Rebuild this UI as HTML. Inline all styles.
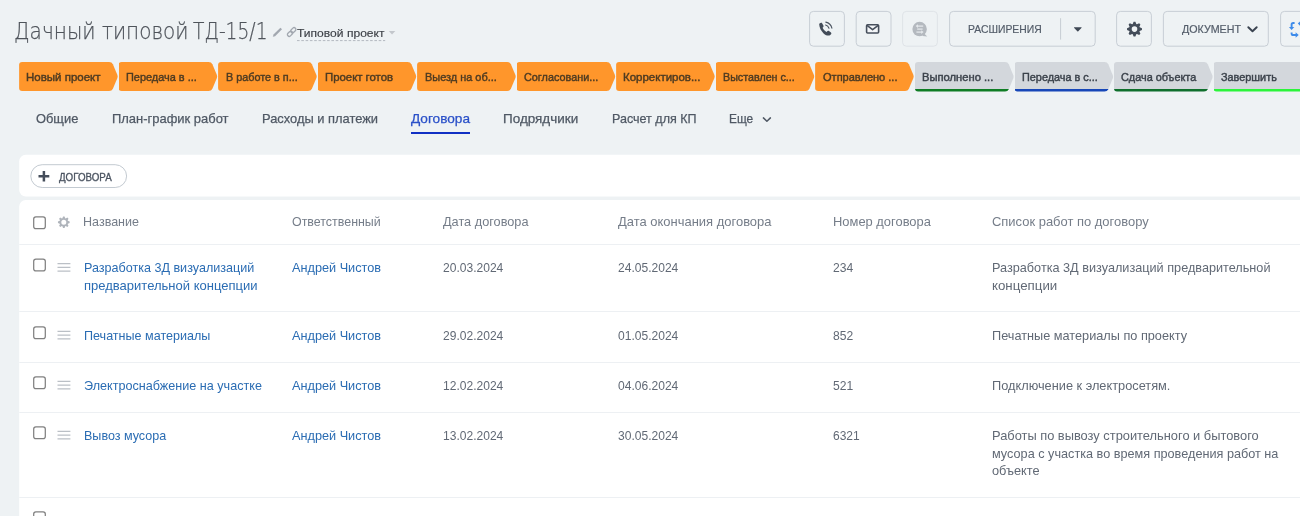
<!DOCTYPE html>
<html lang="ru">
<head>
<meta charset="utf-8">
<title>Дачный типовой ТД-15/1</title>
<style>
*{box-sizing:border-box;margin:0;padding:0}
html,body{width:1300px;height:516px;overflow:hidden;background:#eef2f4;font-family:"Liberation Sans",sans-serif;color:#535c69}
.a{position:absolute}
.t{position:absolute;white-space:nowrap;display:block}
.title{font-family:"DejaVu Sans","Liberation Sans",sans-serif;font-weight:200;font-size:23.3px;line-height:30px;color:#4f545b;-webkit-text-stroke:0.25px currentColor}
.sub{font-size:11.2px;line-height:16px;color:#3d4147;-webkit-text-stroke:0.15px currentColor}
.bt{font-size:11px;line-height:16px;color:#535c69;-webkit-text-stroke:0.2px currentColor}
.sg{font-size:10.7px;line-height:16px;-webkit-text-stroke:0.42px currentColor}
.sg.o{color:#4e3b22}
.sg.g{color:#3b424b}
.tab{font-size:13px;line-height:18px;color:#4f5864;-webkit-text-stroke:0.25px currentColor}
.tab.act{color:#2a50c8}
.add{font-size:10px;line-height:14px;color:#4a5360;-webkit-text-stroke:0.3px currentColor}
.th{font-size:13px;line-height:16px;color:#757d89}
.td{font-size:13px;line-height:18px;color:#616975}
.td.l{color:#2a6cb3}
.so{position:absolute;top:62px;width:99px;height:29px;background:#ff962b;clip-path:path('M3,0H90Q92.8,0 93.8,2.2L98.3,13Q98.9,14.5 98.3,16L93.8,26.8Q92.8,29 90,29H3Q0,29 0,26V3Q0,0 3,0Z')}
.sgr{position:absolute;top:62px;width:99px;height:29.5px;clip-path:path('M3,0H90Q92.8,0 93.8,2.2L98.3,13.3Q98.9,14.8 98.3,16.3L93.8,27.3Q92.8,29.5 90,29.5H3Q0,29.5 0,26.5V3Q0,0 3,0Z')}
svg{position:absolute;overflow:visible}
#tx{position:absolute;left:0;top:0;width:1300px;height:516px;will-change:transform}
</style>
</head>
<body>
<div class="so" style="left:19.1px"></div>
<div class="so" style="left:118.6px"></div>
<div class="so" style="left:218.1px"></div>
<div class="so" style="left:317.6px"></div>
<div class="so" style="left:417.1px"></div>
<div class="so" style="left:516.6px"></div>
<div class="so" style="left:616.1px"></div>
<div class="so" style="left:715.6px"></div>
<div class="so" style="left:815.1px"></div>
<div class="sgr" style="left:915.0px;background:linear-gradient(#d3d7dc 0,#d3d7dc 27px,#0f7d24 27.3px,#0f7d24 100%)"></div>
<div class="sgr" style="left:1014.5px;background:linear-gradient(#d3d7dc 0,#d3d7dc 27px,#1747b8 27.3px,#1747b8 100%)"></div>
<div class="sgr" style="left:1114.0px;background:linear-gradient(#d3d7dc 0,#d3d7dc 27px,#0f6f2c 27.3px,#0f6f2c 100%)"></div>
<div class="sgr" style="left:1213.5px;background:linear-gradient(#d3d7dc 0,#d3d7dc 27px,#2bf43a 27.3px,#2bf43a 100%)"></div>
<div class="a" style="left:411.2px;top:132.2px;width:58.8px;height:1.9px;background:#1130c4"></div>
<svg width="1300" height="516" viewBox="0 0 1300 516" style="left:0;top:0">
<rect x="19.2" y="154.8" width="1300" height="41.7" rx="6.5" fill="#fff"/>
<rect x="19.2" y="200" width="1300" height="340" rx="6.5" fill="#fff"/>
<rect x="19.2" y="244" width="1300" height="1" fill="#edf0f3"/>
<rect x="19.2" y="311" width="1300" height="1" fill="#edf0f3"/>
<rect x="19.2" y="362" width="1300" height="1" fill="#edf0f3"/>
<rect x="19.2" y="412" width="1300" height="1" fill="#edf0f3"/>
<rect x="19.2" y="497" width="1300" height="1" fill="#edf0f3"/>
<rect x="30.8" y="164.7" width="95.8" height="22.8" rx="11.4" fill="none" stroke="#c3cad1" stroke-width="1"/>
<rect x="809.6" y="11.4" width="34.8" height="34.8" rx="3.8" fill="none" stroke="#c3cad1" stroke-width="0.9"/>
<rect x="856.2" y="11.4" width="34.8" height="34.8" rx="3.8" fill="none" stroke="#c3cad1" stroke-width="0.9"/>
<rect x="902.6" y="11.4" width="34.8" height="34.8" rx="3.8" fill="none" stroke="#dde1e5" stroke-width="0.9"/>
<rect x="949.6" y="11.4" width="145.6" height="34.8" rx="3.8" fill="none" stroke="#c3cad1" stroke-width="0.9"/>
<rect x="1116.6" y="11.4" width="34.8" height="34.8" rx="3.8" fill="none" stroke="#c3cad1" stroke-width="0.9"/>
<rect x="1163.4" y="11.4" width="104.9" height="34.8" rx="3.8" fill="none" stroke="#c3cad1" stroke-width="0.9"/>
<rect x="1280.6" y="11.4" width="39.0" height="34.8" rx="3.8" fill="none" stroke="#c3cad1" stroke-width="0.9"/>
<path d="M297,40.6H385.2" stroke="#b3b9c0" stroke-width="1" stroke-dasharray="2.6 1.7" fill="none"/>
<path d="M1060.6,18.2V39.6" stroke="#c6cdd3" stroke-width="1" fill="none"/>
<rect x="33.7" y="216.85" width="11.6" height="11.8" rx="2.2" fill="#fff" stroke="#808080" stroke-width="1.25"/>
<rect x="33.7" y="259.05" width="11.6" height="11.8" rx="2.2" fill="#fff" stroke="#808080" stroke-width="1.25"/>
<rect x="33.7" y="326.85" width="11.6" height="11.8" rx="2.2" fill="#fff" stroke="#808080" stroke-width="1.25"/>
<rect x="33.7" y="376.85" width="11.6" height="11.8" rx="2.2" fill="#fff" stroke="#808080" stroke-width="1.25"/>
<rect x="33.7" y="426.85" width="11.6" height="11.8" rx="2.2" fill="#fff" stroke="#808080" stroke-width="1.25"/>
<rect x="33.7" y="511.85" width="11.6" height="11.8" rx="2.2" fill="#fff" stroke="#808080" stroke-width="1.25"/>
<path d="M57.5,263.60H70.4M57.5,267.35H70.4M57.5,271.10H70.4" stroke="#bbc0c6" stroke-width="1.15" fill="none"/>
<path d="M57.5,331.40H70.4M57.5,335.15H70.4M57.5,338.90H70.4" stroke="#bbc0c6" stroke-width="1.15" fill="none"/>
<path d="M57.5,381.40H70.4M57.5,385.15H70.4M57.5,388.90H70.4" stroke="#bbc0c6" stroke-width="1.15" fill="none"/>
<path d="M57.5,431.40H70.4M57.5,435.15H70.4M57.5,438.90H70.4" stroke="#bbc0c6" stroke-width="1.15" fill="none"/>
<!-- pencil -->
<path d="M272.8,36.8 L273.5,34.6 L280.4,27.7 L282,29.3 L275.1,36.2 Z" fill="#a2a8b0"/>
<!-- link -->
<g fill="none" stroke="#a2a8b0" stroke-width="1.3">
<rect x="-2.9" y="-1.8" width="5.8" height="3.6" rx="1.8" transform="translate(290,33.8) rotate(-44)"/>
<rect x="-2.9" y="-1.8" width="5.8" height="3.6" rx="1.8" transform="translate(293.3,30.2) rotate(-44)"/>
</g>
<!-- sub dropdown triangle -->
<path d="M388.8,30.9 H395.3 L392.05,34.5Z" fill="#c3c7cc"/>
<!-- phone -->
<path d="M819.2,24.6C819,23.4 820.6,22.4 821.8,22.8L823.4,25.6C823.8,26.4 823.4,27.2 822.6,27.8C823.2,29.6 825.2,31.4 826.6,32C827.4,31 828.2,30.6 829,31L831,32.6C831.8,33.4 831.2,34.6 830,35.2C828.4,36 826,35.6 823.6,33.4C821,31 819.4,27.6 819.2,24.6Z" fill="#434c59"/>
<g fill="none" stroke="#4a5360" stroke-width="1.1" stroke-linecap="round">
<path d="M825.8,22.1 A8.1,8.1 0 0 1 831.9,28.2"/>
<path d="M825.6,25 A5.2,5.2 0 0 1 829,28.2"/>
</g>
<!-- mail -->
<g fill="none" stroke="#464f5c" stroke-width="1.6" stroke-linejoin="round">
<rect x="866.6" y="24.8" width="12" height="8.2" rx="1" fill="#f4f6f8"/>
<path d="M867,25.3 L872.6,29.6 L878.2,25.3"/>
</g>
<!-- chat -->
<circle cx="919.6" cy="29.1" r="7.25" fill="#b4b9bf"/>
<path d="M924,33.2 L927.2,36.6 L922.6,36Z" fill="#b4b9bf"/>
<g fill="none" stroke="#e4e8eb" stroke-width="1.3">
<path d="M917,26.1H923.2"/><path d="M917.2,29.1H922.6"/><path d="M916.4,32.1H922.2"/>
</g>
<path d="M915.6,26.1L918,24.3V27.9Z" fill="#e4e8eb"/>
<path d="M923.6,32.1L921.2,30.3V33.9Z" fill="#e4e8eb"/>
<!-- dropdown triangle -->
<path d="M1074.2,27.2H1081.4Q1081.9,27.6 1081.4,28.1L1078.3,31.3Q1077.8,31.7 1077.3,31.3L1074.2,28.1Q1073.7,27.6 1074.2,27.2Z" fill="#3f4855"/>
<!-- gear -->
<path d="M1132.72,23.90 L1133.60,21.65 L1135.40,21.65 L1136.28,23.90 L1136.92,24.16 L1139.13,23.20 L1140.40,24.47 L1139.44,26.68 L1139.70,27.32 L1141.95,28.20 L1141.95,30.00 L1139.70,30.88 L1139.44,31.52 L1140.40,33.73 L1139.13,35.00 L1136.92,34.04 L1136.28,34.30 L1135.40,36.55 L1133.60,36.55 L1132.72,34.30 L1132.08,34.04 L1129.87,35.00 L1128.60,33.73 L1129.56,31.52 L1129.30,30.88 L1127.05,30.00 L1127.05,28.20 L1129.30,27.32 L1129.56,26.68 L1128.60,24.47 L1129.87,23.20 L1132.08,24.16Z M1131.70,29.10 a2.80,2.80 0 1,0 5.60,0 a2.80,2.80 0 1,0 -5.60,0Z" fill="#434c59" fill-rule="evenodd"/>
<!-- chevron doc -->
<path d="M1248.3,27.2 L1252.5,31.3 L1256.7,27.2" fill="none" stroke="#3a4350" stroke-width="1.9" stroke-linecap="round" stroke-linejoin="round"/>
<!-- sync blue -->
<g fill="none" stroke="#3d8bea" stroke-width="1.9">
<path d="M1294.6,23 H1293.2 Q1291.6,23 1291.6,24.6 V27.6"/>
<path d="M1291.6,32.4 V33.4 Q1291.6,35 1293.2,35 H1296"/>
</g>
<path d="M1288.9,26.9H1294.3L1291.6,30Z" fill="#3d8bea"/>
<path d="M1295.6,32.3V37.7L1298.7,35Z" fill="#3d8bea"/>
<path d="M1297.8,23.6L1300.5,20.9V26.3Z" fill="#3d8bea"/>
<!-- tab chevron -->
<path d="M763.4,117.9 L766.9,121.3 L770.4,117.9" fill="none" stroke="#4f5864" stroke-width="1.5" stroke-linecap="round" stroke-linejoin="round"/>
<!-- plus -->
<path d="M43.9,170.9V181.5M38.5,176.2H49.3" fill="none" stroke="#444d5a" stroke-width="2.5"/>
<!-- small gear -->
<path d="M62.41,218.18 L63.04,216.40 L64.56,216.40 L65.19,218.18 L65.69,218.39 L67.40,217.57 L68.48,218.65 L67.66,220.36 L67.87,220.86 L69.65,221.49 L69.65,223.01 L67.87,223.64 L67.66,224.14 L68.48,225.85 L67.40,226.93 L65.69,226.11 L65.19,226.32 L64.56,228.10 L63.04,228.10 L62.41,226.32 L61.91,226.11 L60.20,226.93 L59.12,225.85 L59.94,224.14 L59.73,223.64 L57.95,223.01 L57.95,221.49 L59.73,220.86 L59.94,220.36 L59.12,218.65 L60.20,217.57 L61.91,218.39Z M61.30,222.25 a2.50,2.50 0 1,0 5.00,0 a2.50,2.50 0 1,0 -5.00,0Z" fill="#afb4bb" fill-rule="evenodd"/>
</svg>
<div id="tx">
<span class="t title" style="left:13.60px;top:15.60px;transform-origin:0 0;transform:scaleX(0.8621);">Дачный</span>
<span class="t title" style="left:101.70px;top:15.60px;transform-origin:0 0;transform:scaleX(0.8575);">типовой</span>
<span class="t title" style="left:193.40px;top:15.60px;transform-origin:0 0;transform:scaleX(0.8007);">ТД-15/1</span>
<span class="t sub" style="left:296.70px;top:25.20px;transform-origin:0 0;transform:scaleX(1.0784);">Типовой проект</span>
<span class="t bt" style="left:968.00px;top:20.80px;transform-origin:0 0;transform:scaleX(0.9435);">РАСШИРЕНИЯ</span>
<span class="t bt" style="left:1181.80px;top:20.80px;transform-origin:0 0;transform:scaleX(0.9719);">ДОКУМЕНТ</span>
<span class="t sg o" style="left:26.30px;top:69.20px;transform-origin:0 0;transform:scaleX(1.0753);">Новый проект</span>
<span class="t sg o" style="left:126.25px;top:69.20px;transform-origin:0 0;transform:scaleX(1.0214);">Передача в ...</span>
<span class="t sg o" style="left:225.75px;top:69.20px;transform-origin:0 0;transform:scaleX(1.0126);">В работе в п...</span>
<span class="t sg o" style="left:325.00px;top:69.20px;transform-origin:0 0;transform:scaleX(1.0633);">Проект готов</span>
<span class="t sg o" style="left:424.50px;top:69.20px;transform-origin:0 0;transform:scaleX(1.0223);">Выезд на об...</span>
<span class="t sg o" style="left:524.00px;top:69.20px;transform-origin:0 0;transform:scaleX(1.0143);">Согласовани...</span>
<span class="t sg o" style="left:623.25px;top:69.20px;transform-origin:0 0;transform:scaleX(1.0743);">Корректиров...</span>
<span class="t sg o" style="left:723.25px;top:69.20px;transform-origin:0 0;transform:scaleX(1.0020);">Выставлен с...</span>
<span class="t sg o" style="left:822.50px;top:69.20px;transform-origin:0 0;transform:scaleX(1.0316);">Отправлено ...</span>
<span class="t sg g" style="left:921.80px;top:69.20px;transform-origin:0 0;transform:scaleX(1.0466);">Выполнено ...</span>
<span class="t sg g" style="left:1021.50px;top:69.20px;transform-origin:0 0;transform:scaleX(1.0160);">Передача в с...</span>
<span class="t sg g" style="left:1120.80px;top:69.20px;transform-origin:0 0;transform:scaleX(1.0162);">Сдача объекта</span>
<span class="t sg g" style="left:1220.50px;top:69.20px;transform-origin:0 0;transform:scaleX(1.0171);">Завершить</span>
<span class="t tab" style="left:35.60px;top:110.00px;transform-origin:0 0;transform:scaleX(0.9895);">Общие</span>
<span class="t tab" style="left:111.60px;top:110.00px;transform-origin:0 0;transform:scaleX(0.9963);">План-график работ</span>
<span class="t tab" style="left:262.10px;top:110.00px;transform-origin:0 0;transform:scaleX(0.9905);">Расходы и платежи</span>
<span class="t tab act" style="left:410.50px;top:110.00px;transform-origin:0 0;transform:scaleX(1.0474);">Договора</span>
<span class="t tab" style="left:502.80px;top:110.00px;transform-origin:0 0;transform:scaleX(1.0361);">Подрядчики</span>
<span class="t tab" style="left:611.50px;top:110.00px;transform-origin:0 0;transform:scaleX(0.9635);">Расчет для КП</span>
<span class="t tab" style="left:729.30px;top:110.00px;transform-origin:0 0;transform:scaleX(0.9148);">Еще</span>
<span class="t add" style="left:59.20px;top:170.50px;transform-origin:0 0;transform:scaleX(0.9762);">ДОГОВОРА</span>
<span class="t th" style="left:83.00px;top:214.00px;transform-origin:0 0;transform:scaleX(0.9640);">Название</span>
<span class="t th" style="left:292.00px;top:214.00px;transform-origin:0 0;transform:scaleX(0.9559);">Ответственный</span>
<span class="t th" style="left:442.50px;top:214.00px;transform-origin:0 0;transform:scaleX(0.9787);">Дата договора</span>
<span class="t th" style="left:617.50px;top:214.00px;transform-origin:0 0;transform:scaleX(0.9973);">Дата окончания договора</span>
<span class="t th" style="left:832.80px;top:214.00px;transform-origin:0 0;transform:scaleX(0.9930);">Номер договора</span>
<span class="t th" style="left:992.30px;top:214.00px;transform-origin:0 0;transform:scaleX(0.9965);">Список работ по договору</span>
<span class="t td l" style="left:84.00px;top:259.00px;transform-origin:0 0;transform:scaleX(0.9664);">Разработка 3Д визуализаций</span>
<span class="t td l" style="left:84.00px;top:276.60px;transform-origin:0 0;transform:scaleX(1.0011);">предварительной концепции</span>
<span class="t td l" style="left:291.70px;top:259.00px;transform-origin:0 0;transform:scaleX(0.9771);">Андрей Чистов</span>
<span class="t td" style="left:442.70px;top:259.00px;transform-origin:0 0;transform:scaleX(0.9266);">20.03.2024</span>
<span class="t td" style="left:617.90px;top:259.00px;transform-origin:0 0;transform:scaleX(0.9266);">24.05.2024</span>
<span class="t td" style="left:832.80px;top:259.00px;transform-origin:0 0;transform:scaleX(0.9307);">234</span>
<span class="t td" style="left:992.30px;top:259.00px;transform-origin:0 0;transform:scaleX(0.9749);">Разработка 3Д визуализаций предварительной</span>
<span class="t td" style="left:992.30px;top:276.60px;transform-origin:0 0;transform:scaleX(1.0238);">концепции</span>
<span class="t td l" style="left:84.00px;top:327.00px;transform-origin:0 0;transform:scaleX(0.9667);">Печатные материалы</span>
<span class="t td l" style="left:291.70px;top:327.00px;transform-origin:0 0;transform:scaleX(0.9771);">Андрей Чистов</span>
<span class="t td" style="left:442.70px;top:327.00px;transform-origin:0 0;transform:scaleX(0.9266);">29.02.2024</span>
<span class="t td" style="left:617.90px;top:327.00px;transform-origin:0 0;transform:scaleX(0.9266);">01.05.2024</span>
<span class="t td" style="left:832.80px;top:327.00px;transform-origin:0 0;transform:scaleX(0.9307);">852</span>
<span class="t td" style="left:992.30px;top:327.00px;transform-origin:0 0;transform:scaleX(0.9779);">Печатные материалы по проекту</span>
<span class="t td l" style="left:84.00px;top:377.00px;transform-origin:0 0;transform:scaleX(0.9698);">Электроснабжение на участке</span>
<span class="t td l" style="left:291.70px;top:377.00px;transform-origin:0 0;transform:scaleX(0.9771);">Андрей Чистов</span>
<span class="t td" style="left:442.70px;top:377.00px;transform-origin:0 0;transform:scaleX(0.9266);">12.02.2024</span>
<span class="t td" style="left:617.90px;top:377.00px;transform-origin:0 0;transform:scaleX(0.9266);">04.06.2024</span>
<span class="t td" style="left:832.80px;top:377.00px;transform-origin:0 0;transform:scaleX(0.9307);">521</span>
<span class="t td" style="left:992.30px;top:377.00px;transform-origin:0 0;transform:scaleX(0.9824);">Подключение к электросетям.</span>
<span class="t td l" style="left:84.00px;top:427.00px;transform-origin:0 0;transform:scaleX(0.9646);">Вывоз мусора</span>
<span class="t td l" style="left:291.70px;top:427.00px;transform-origin:0 0;transform:scaleX(0.9771);">Андрей Чистов</span>
<span class="t td" style="left:442.70px;top:427.00px;transform-origin:0 0;transform:scaleX(0.9266);">13.02.2024</span>
<span class="t td" style="left:617.90px;top:427.00px;transform-origin:0 0;transform:scaleX(0.9266);">30.05.2024</span>
<span class="t td" style="left:832.80px;top:427.00px;transform-origin:0 0;transform:scaleX(0.9232);">6321</span>
<span class="t td" style="left:992.30px;top:427.00px;transform-origin:0 0;transform:scaleX(0.9881);">Работы по вывозу строительного и бытового</span>
<span class="t td" style="left:992.30px;top:444.60px;transform-origin:0 0;transform:scaleX(0.9749);">мусора с участка во время проведения работ на</span>
<span class="t td" style="left:992.30px;top:462.20px;transform-origin:0 0;transform:scaleX(0.9838);">объекте</span>
</div>
</body>
</html>
